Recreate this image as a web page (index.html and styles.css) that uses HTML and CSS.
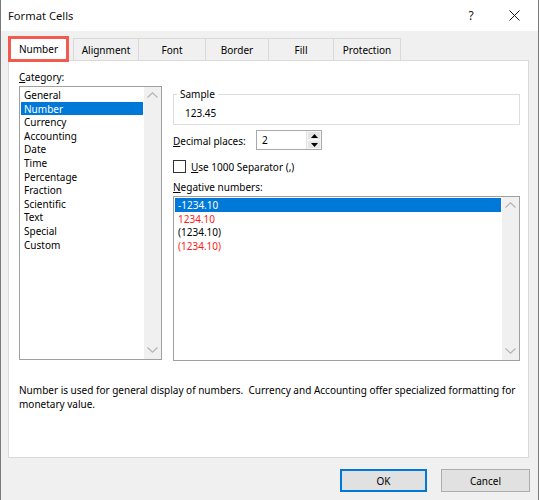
FILE: index.html
```html
<!DOCTYPE html>
<html>
<head>
<meta charset="utf-8">
<link rel="stylesheet" href="styles.css">
</head>
<body>
<div class="window">
  <div class="titlebar">
    <span class="title">Format Cells</span>
    <span class="help">?</span>
    <span class="close"><svg width="11" height="11" viewBox="0 0 11 11"><path d="M0.5 0.5 L10.5 10.5 M10.5 0.5 L0.5 10.5" stroke="#1a1a1a" stroke-width="1" fill="none"/></svg></span>
  </div>
  <div class="body">
    <div class="tabs">
      <div class="tab tab-active">Number</div>
      <div class="tab w-align">Alignment</div>
      <div class="tab w-font">Font</div>
      <div class="tab w-border">Border</div>
      <div class="tab w-fill">Fill</div>
      <div class="tab w-prot">Protection</div>
    </div>
    <div class="panel">
      <div class="cols">
        <div class="left">
          <div class="label"><u>C</u>ategory:</div>
          <div class="listbox cat">
            <div class="items">
              <div class="item">General</div>
              <div class="item selected">Number</div>
              <div class="item">Currency</div>
              <div class="item">Accounting</div>
              <div class="item">Date</div>
              <div class="item">Time</div>
              <div class="item">Percentage</div>
              <div class="item">Fraction</div>
              <div class="item">Scientific</div>
              <div class="item">Text</div>
              <div class="item">Special</div>
              <div class="item">Custom</div>
            </div>
            <div class="scroll">
              <svg class="chev" width="11" height="6" viewBox="0 0 11 6"><path d="M0.5 5.5 L5.5 0.8 L10.5 5.5" stroke="#b4b4b4" stroke-width="1.2" fill="none"/></svg>
              <svg class="chev" width="11" height="6" viewBox="0 0 11 6"><path d="M0.5 0.5 L5.5 5.2 L10.5 0.5" stroke="#b4b4b4" stroke-width="1.2" fill="none"/></svg>
            </div>
          </div>
        </div>
        <div class="right">
          <fieldset class="sample">
            <legend>Sample</legend>
            <div class="sample-val">123.45</div>
          </fieldset>
          <div class="dec-row">
            <span class="dec-label"><u>D</u>ecimal places:</span>
            <div class="spin">
              <span class="spin-val">2</span>
              <div class="spin-btns">
                <div class="spin-btn"><svg width="7" height="4" viewBox="0 0 7 4"><path d="M0 4 L3.5 0 L7 4 Z" fill="#000"/></svg></div>
                <div class="spin-btn"><svg width="7" height="4" viewBox="0 0 7 4"><path d="M0 0 L3.5 4 L7 0 Z" fill="#000"/></svg></div>
              </div>
            </div>
          </div>
          <div class="check-row">
            <span class="checkbox"></span>
            <span><u>U</u>se 1000 Separator (,)</span>
          </div>
          <div class="label neg-label"><u>N</u>egative numbers:</div>
          <div class="listbox neg">
            <div class="items">
              <div class="item selected">-1234.10</div>
              <div class="item red">1234.10</div>
              <div class="item">(1234.10)</div>
              <div class="item red">(1234.10)</div>
            </div>
            <div class="scroll">
              <svg class="chev" width="11" height="6" viewBox="0 0 11 6"><path d="M0.5 5.5 L5.5 0.8 L10.5 5.5" stroke="#b4b4b4" stroke-width="1.2" fill="none"/></svg>
              <svg class="chev" width="11" height="6" viewBox="0 0 11 6"><path d="M0.5 0.5 L5.5 5.2 L10.5 0.5" stroke="#b4b4b4" stroke-width="1.2" fill="none"/></svg>
            </div>
          </div>
        </div>
      </div>
      <p class="desc">Number is used for general display of numbers.&nbsp; Currency and Accounting offer specialized formatting for<br>monetary value.</p>
    </div>
    <div class="buttons">
      <div class="btn btn-default">OK</div>
      <div class="btn">Cancel</div>
    </div>
  </div>
</div>
</body>
</html>
```

FILE: styles.css
```css
* { box-sizing: border-box; }
html, body { margin: 0; padding: 0; }
body {
  width: 539px;
  height: 500px;
  overflow: hidden;
  font-family: "Noto Sans", "Open Sans", sans-serif;
  font-size: 10px;
  color: #000;
  background: #f0f0f0;
}
u { text-decoration: underline; text-underline-offset: 1px; }
.window {
  width: 539px;
  height: 500px;
  border-left: 1px solid #7a7a7a;
  border-right: 1px solid #7a7a7a;
  background: #f0f0f0;
}
.titlebar {
  height: 31px;
  background: #fff;
  display: flex;
  align-items: center;
  padding-left: 7px;
}
.title { font-size: 11.2px; flex: 1; padding-bottom: 1px; color: #111; }
.help { width: 16px; text-align: center; font-size: 12px; margin-right: 30px; color: #1a1a1a; }
.close { width: 11px; height: 11px; display: flex; margin-right: 18px; margin-bottom: 1px; }
.body { padding: 0 9px 0 7px; }
.tabs {
  display: flex;
  align-items: flex-end;
  height: 29px;
}
.tab {
  height: 22px;
  border: 1px solid #d9d9d9;
  border-bottom: none;
  margin-left: -1px;
  display: flex;
  align-items: center;
  justify-content: center;
  background: #f0f0f0;
  padding-top: 1px;
}
.tab-active {
  width: 61px;
  height: 26px;
  margin-left: 0;
  margin-right: 5px;
  margin-bottom: -2px;
  background: #fff;
  border: 3px solid #f05a4f;
  position: relative;
  z-index: 1;
  padding-top: 0;
}
.w-align { width: 66px; }
.w-font { width: 68px; }
.w-border { width: 64px; }
.w-fill { width: 66px; }
.w-prot { width: 68px; }
.panel {
  height: 398px;
  background: #fff;
  border: 1px solid #d9d9d9;
  padding: 9px 10px 0 10px;
}
.cols {
  display: grid;
  grid-template-columns: 143px 347px;
  column-gap: 11px;
}
.label { height: 14px; line-height: 15px; white-space: nowrap; }
.listbox {
  display: flex;
  background: #fff;
  border: 1px solid #a0a0a0;
}
.cat { height: 274px; margin-top: 2px; }
.neg { height: 165px; margin-top: 2px; }
.items { flex: 1; padding: 1px; }
.item {
  height: 13.6px;
  line-height: 14.4px;
  padding-left: 3px;
  white-space: nowrap;
}
.item.selected { background: #0078d7; color: #fff; }
.item.red { color: #ff1a1a; }
.scroll {
  width: 17px;
  background: #f0f0f0;
  display: flex;
  flex-direction: column;
  justify-content: space-between;
  align-items: center;
  padding: 5px 0 6px;
}
.chev { display: block; }
.sample {
  margin: 17px 0 0 0;
  padding: 5px 0 4px 11px;
  border: 1px solid #dcdcdc;
  min-width: 0;
}
.sample legend {
  padding: 0 3px;
  margin-left: -8px;
  line-height: 14px;
}
.sample-val { height: 14px; line-height: 15px; }
.dec-row {
  display: flex;
  align-items: center;
  height: 20px;
  margin-top: 5px;
}
.dec-label { width: 83px; white-space: nowrap; padding-top: 1px; }
.spin {
  width: 66px;
  height: 20px;
  border: 1px solid #a9a9a9;
  display: flex;
  background: #fff;
}
.spin-val { flex: 1; padding-left: 5px; line-height: 18px; }
.spin-btns {
  width: 15px;
  display: flex;
  flex-direction: column;
  border-left: 1px solid #e3e3e3;
}
.spin-btn {
  flex: 1;
  background: #e6e6e6;
  border: 1px solid #f5f5f5;
  display: flex;
  align-items: center;
  justify-content: center;
}
.check-row {
  display: flex;
  align-items: center;
  height: 13px;
  margin-top: 10px;
  gap: 5px;
  white-space: nowrap;
}
.checkbox {
  width: 13px;
  height: 13px;
  border: 1px solid #333;
  background: #fff;
}
.neg-label { margin-top: 7px; }
.desc {
  margin: 22px 0 0 0;
  line-height: 13.5px;
  padding-top: 1px;
  white-space: nowrap;
}
.buttons {
  display: flex;
  justify-content: flex-end;
  gap: 14px;
  margin-top: 11px;
  margin-right: -1px;
}
.btn {
  width: 89px;
  height: 23px;
  background: #e1e1e1;
  border: 1px solid #adadad;
  display: flex;
  align-items: center;
  justify-content: center;
  padding-top: 1px;
}
.btn-default {
  width: 87px;
  border: 2px solid #0078d7;
}
```
